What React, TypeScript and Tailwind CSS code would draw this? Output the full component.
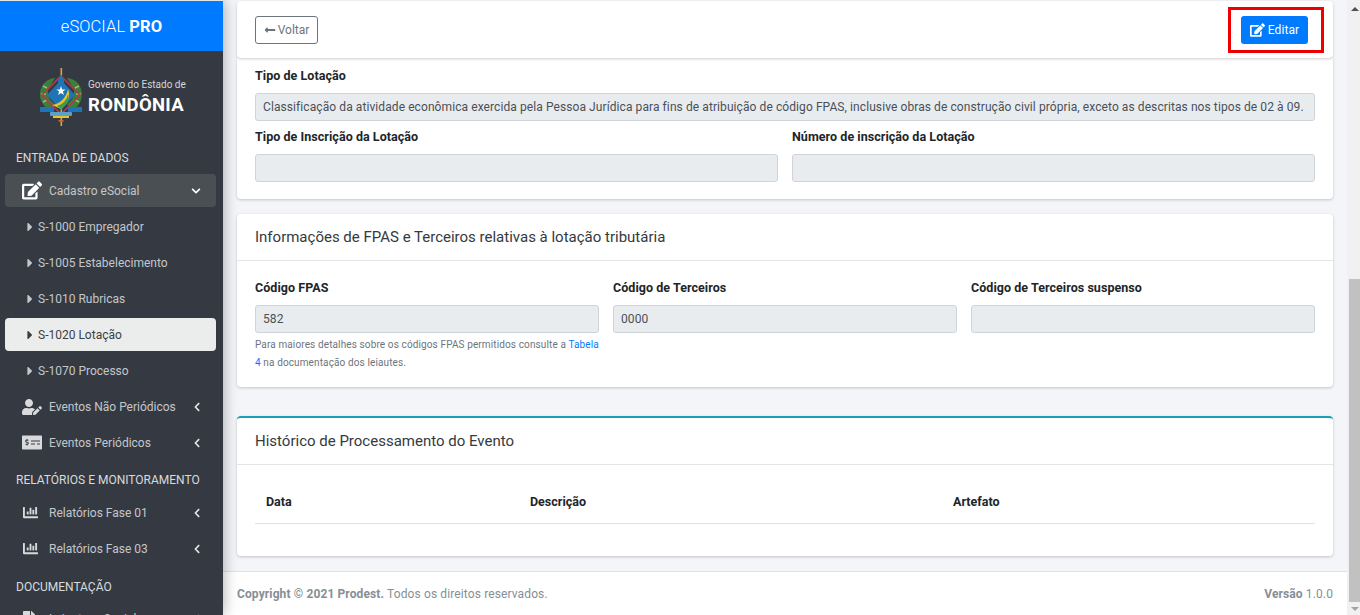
import type { ReactNode } from "react";
import {
  FaCaretRight,
  FaChartBar,
  FaChevronDown,
  FaChevronLeft,
  FaEdit,
  FaFileAlt,
  FaLongArrowAltLeft,
  FaMoneyCheckAlt,
  FaUserEdit,
} from "react-icons/fa";

function Emblem() {
  return (
    <svg width="46" height="58" viewBox="0 0 46 58" className="shrink-0">
      {/* spire */}
      <rect x="22.5" y="0" width="1.6" height="58" fill="#d9a441" />
      <rect x="20.5" y="52" width="5" height="1.6" fill="#d9642f" />
      {/* wreath */}
      <path d="M17 10 C4 11 0 24 3 32 C5 38 9 41 14 42 L17 36 C10 32 8 24 12 18 Z" fill="#3f7d3c" />
      <path d="M29 10 C42 11 46 24 43 32 C41 38 37 41 32 42 L29 36 C36 32 38 24 34 18 Z" fill="#3f7d3c" />
      <path d="M5 18 L9 20 M3 26 L8 26 M5 34 L9 32 M41 18 L37 20 M43 26 L38 26 M41 34 L37 32" stroke="#9fbf6f" strokeWidth="1.4" />
      {/* diamond */}
      <path d="M23 8 L42 27 L23 46 L4 27 Z" fill="none" stroke="#b33a4a" strokeWidth="1.6" />
      <path d="M23 12 L37 27 L23 42 L9 27 Z" fill="#1f74b8" />
      <path d="M20 12 L23 7 L26 12 L26 17 L20 17 Z" fill="#1f74b8" />
      <path d="M14 37 C21 36 28 31 30 21 C33 28 30 36 23 41 Z" fill="#e4c62c" />
      <path d="M19 38 C25 36 29 32 30 26 C32 31 29 37 23 41 Z" fill="#3d9b47" />
      <path d="M23 18 L24.2 21.4 L27.6 21.5 L24.9 23.6 L25.9 27 L23 25 L20.1 27 L21.1 23.6 L18.4 21.5 L21.8 21.4 Z" fill="#ffffff" />
      {/* ribbon */}
      <rect x="2" y="39" width="14" height="5" fill="#1f74b8" />
      <rect x="30" y="39" width="14" height="5" fill="#1f74b8" />
      <rect x="12" y="44" width="22" height="4" rx="1" fill="#5aa0c8" />
      <rect x="15" y="48" width="16" height="2" fill="#e4c62c" />
    </svg>
  );
}

function SectionLabel({ children, className }: { children: ReactNode; className: string }) {
  return <div className={`shrink-0 pl-4 text-[12px] leading-[14px] text-[#d8dadc] ${className}`}>{children}</div>;
}

function SubItem({ label, active }: { label: string; active?: boolean }) {
  return (
    <div
      className={`mb-[3px] ml-[5px] mr-[7px] flex h-[33px] shrink-0 items-center rounded-[4px] pl-[20px] text-[12px] ${
        active ? "bg-[#ebedec] text-[#3a3f45]" : "text-[#c4c7ca]"
      }`}
    >
      <FaCaretRight className="mr-[3px] h-[14px] w-[10px]" />
      <span>{label}</span>
    </div>
  );
}

function NavItem({
  icon,
  label,
  open,
}: {
  icon: ReactNode;
  label: string;
  open?: boolean;
}) {
  return (
    <div
      className={`mb-[3px] ml-[5px] mr-[7px] flex h-[33px] shrink-0 items-center rounded-[4px] pl-[17px] pr-[15px] text-[12px] text-[#c4c7ca] ${
        open ? "bg-[#4a4f54]" : ""
      }`}
    >
      <span className="flex w-[27px] shrink-0 items-center">{icon}</span>
      <span className="flex-1">{label}</span>
      {open ? (
        <FaChevronDown className="h-[10px] w-[10px] text-white" />
      ) : (
        <FaChevronLeft className="h-[10px] w-[8px] text-[#e4e5e7]" />
      )}
    </div>
  );
}

function Field({
  label,
  value,
  full,
}: {
  label: string;
  value?: string;
  full?: boolean;
}) {
  return (
    <div className={full ? "col-span-2" : ""}>
      <div className="mb-[6px] text-[12.5px] font-bold leading-[22px] tracking-[0.05px] text-[#212529]">{label}</div>
      <div className="flex h-[28px] items-center rounded-[3px] border border-[#ced4da] bg-[#e9ecef] px-[7px] text-[12px] tracking-[0.085px] text-[#495057]">
        {value}
      </div>
    </div>
  );
}

function Card({ children, className = "" }: { children: ReactNode; className?: string }) {
  return (
    <div className={`rounded-[4px] bg-white shadow-[0_1px_3px_rgba(0,0,0,0.2)] ${className}`}>{children}</div>
  );
}

function Sidebar() {
  return (
    <aside className="relative z-10 flex h-full w-[223px] shrink-0 flex-col overflow-hidden border-t border-[#e4e5e7] bg-[#353a42] shadow-[0_0_14px_rgba(0,0,0,0.35)]">
      <div className="flex h-[50px] shrink-0 items-center justify-center bg-[#007bff] pt-[3px] text-[16.5px] font-light tracking-[0.1px] text-white">
        eSOCIAL&nbsp;<b className="font-bold">PRO</b>
      </div>
      <div className="flex h-[91px] shrink-0 items-center pl-[38px] pt-[1px]">
        <Emblem />
        <div className="ml-[4px] text-white">
          <div className="text-[10px] leading-[14px] text-[#d4d6d8]">Governo do Estado de</div>
          <div className="mt-[1px] text-[18.5px] font-bold leading-[24px] tracking-[0.3px]">RONDÔNIA</div>
        </div>
      </div>
      <SectionLabel className="mt-[9px] mb-[9px]">ENTRADA DE DADOS</SectionLabel>
      <NavItem open icon={<FaEdit className="h-[19px] w-[20px] text-white" />} label="Cadastro eSocial" />
      <SubItem label="S-1000 Empregador" />
      <SubItem label="S-1005 Estabelecimento" />
      <SubItem label="S-1010 Rubricas" />
      <SubItem active label="S-1020 Lotação" />
      <SubItem label="S-1070 Processo" />
      <NavItem icon={<FaUserEdit className="h-[16px] w-[20px] text-[#d8dadc]" />} label="Eventos Não Periódicos" />
      <NavItem icon={<FaMoneyCheckAlt className="h-[17px] w-[20px] text-[#d8dadc]" />} label="Eventos Periódicos" />
      <SectionLabel className="mt-[11px] mb-[9px]">RELATÓRIOS E MONITORAMENTO</SectionLabel>
      <NavItem icon={<FaChartBar className="h-[15px] w-[17px] text-[#d8dadc]" />} label="Relatórios Fase 01" />
      <NavItem icon={<FaChartBar className="h-[15px] w-[17px] text-[#d8dadc]" />} label="Relatórios Fase 03" />
      <SectionLabel className="mt-[12px] mb-[8px]">DOCUMENTAÇÃO</SectionLabel>
      <NavItem icon={<FaFileAlt className="h-[16px] w-[14px] text-[#d8dadc]" />} label="Leiautes eSocial" />
    </aside>
  );
}

function Scrollbar() {
  return (
    <div className="flex h-full w-[13px] shrink-0 flex-col bg-[#f1f1f1] pl-[2px]">
      <div className="flex h-[17px] items-center justify-center">
        <div className="h-0 w-0 border-x-[4px] border-b-[4px] border-x-transparent border-b-[#505050]" />
      </div>
      <div className="mt-[262px] h-[323px] bg-[#c1c1c1]" />
      <div className="flex flex-1 items-center justify-center">
        <div className="h-0 w-0 border-x-[4px] border-t-[4px] border-x-transparent border-t-[#a3a3a3]" />
      </div>
    </div>
  );
}

export default function App() {
  return (
    <div className="flex h-[615px] w-[1360px] overflow-hidden bg-[#f4f5f9] font-['Roboto',sans-serif]">
      <Sidebar />
      <div className="flex h-full min-w-0 flex-1 flex-col pt-px">
        <main className="flex-1 px-[14px]">
          <Card className="relative flex h-[57px] items-center justify-between px-[18px]">
            <button className="flex h-[28px] w-[63px] items-center justify-center rounded-[3px] border border-[#6c757d] text-[12px] text-[#6c757d]">
              <FaLongArrowAltLeft className="mr-[2px] h-[12px] w-[12px]" />
              Voltar
            </button>
            <button className="mr-[7px] flex h-[28px] w-[67px] items-center justify-center rounded-[3px] bg-[#007bff] text-[12px] tracking-[0.1px] text-white">
              <FaEdit className="mr-[3px] h-[14px] w-[15px]" />
              Editar
            </button>
            <div className="absolute right-[9px] top-[6px] h-[46px] w-[96px] border-[3px] border-[#ee0000]" />
          </Card>

          <Card className="rounded-t-none px-[18px] pb-[17px] pt-[7px]">
            <div className="grid grid-cols-2 gap-x-[14px] gap-y-[5px]">
              <Field
                full
                label="Tipo de Lotação"
                value="Classificação da atividade econômica exercida pela Pessoa Jurídica para fins de atribuição de código FPAS, inclusive obras de construção civil própria, exceto as descritas nos tipos de 02 à 09."
              />
              <Field label="Tipo de Inscrição da Lotação" />
              <Field label="Número de inscrição da Lotação" />
            </div>
          </Card>

          <Card className="mt-[15px] h-[173px]">
            <div className="flex h-[47px] items-center border-b border-[#e4e5e7] px-[18px] text-[15px] text-[#343a40]">
              Informações de FPAS e Terceiros relativas à lotação tributária
            </div>
            <div className="grid grid-cols-3 gap-x-[14px] px-[18px] pt-[16px]">
              <div>
                <Field label="Código FPAS" value="582" />
                <p className="mt-[2px] pt-px text-[10px] leading-[18px] tracking-[0.12px] text-[#6c757d]">
                  Para maiores detalhes sobre os códigos FPAS permitidos consulte a{" "}
                  <span className="text-[#007bff]">Tabela 4</span> na documentação dos leiautes.
                </p>
              </div>
              <Field label="Código de Terceiros" value="0000" />
              <Field label="Código de Terceiros suspenso" />
            </div>
          </Card>

          <Card className="mt-[29px] h-[140px] border-t-2 border-[#17a2b8]">
            <div className="flex h-[47px] items-center border-b border-[#e4e5e7] px-[18px] text-[15px] text-[#343a40]">
              Histórico de Processamento do Evento
            </div>
            <div className="mx-[18px] grid h-[59px] grid-cols-[264px_423px_1fr] items-center border-b border-[#dee2e6] pt-[17px] text-[12.5px] font-bold text-[#212529]">
              <span className="pl-[11px]">Data</span>
              <span className="pl-[11px]">Descrição</span>
              <span className="pl-[11px]">Artefato</span>
            </div>
          </Card>
        </main>
        <footer className="flex h-[44px] shrink-0 items-center justify-between border-t border-[#dee2e6] bg-white px-[14px] pt-px text-[12px] tracking-[0.12px] text-[#868e96]">
          <span>
            <b>Copyright © 2021 Prodest.</b> Todos os direitos reservados.
          </span>
          <span>
            <b>Versão</b> 1.0.0
          </span>
        </footer>
      </div>
      <Scrollbar />
    </div>
  );
}
